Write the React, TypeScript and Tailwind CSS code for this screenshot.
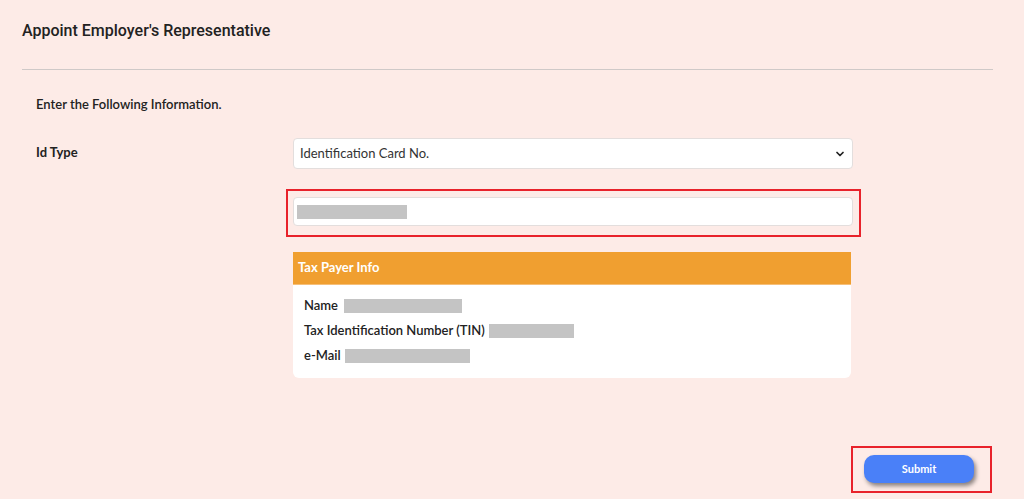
import { ChevronDown } from "lucide-react";

const body = "font-['Lato','Liberation_Sans',sans-serif]";

function Redacted({ className }: { className: string }) {
  return <span className={`inline-block h-[14px] bg-[#c4c4c4] align-middle ${className}`} />;
}

export default function App() {
  return (
    <div className={`min-h-[499px] w-full bg-[#fdebe7] px-[22px] pt-[21px] text-[#222] ${body}`}>
      <h1 className="font-['Roboto',sans-serif] text-[16px] font-medium leading-5 text-[#222]">
        Appoint Employer's Representative
      </h1>
      <div className="mt-[28px] mr-[9px] h-px bg-[#cfc9c8]" />

      <div className="pl-[14px]">
        <p className="mt-[26px] text-[13px] font-semibold leading-4">Enter the Following Information.</p>

        <div className="mt-[26px] flex">
          <label className="w-[257px] shrink-0 pt-[6px] text-[13px] font-bold leading-4">Id Type</label>
          <div className="w-[560px]">
            <div className="flex h-[31px] items-center justify-between rounded-[4px] border border-[#e3dedd] bg-white pl-[6px] pr-[6px]">
              <span className="text-[13px] text-[#333]">Identification Card No.</span>
              <ChevronDown size={12} strokeWidth={3.5} className="text-[#222]" />
            </div>

            <div className="relative mt-[28px]">
              <div className="flex h-[29px] items-center rounded-[4px] border border-[#e3dedd] bg-white pl-[3px]">
                <Redacted className="w-[110px]" />
              </div>
              <span className="pointer-events-none absolute -top-[8px] -bottom-[11px] -left-[7px] -right-[8px] border-2 border-[#e8222b]" />
            </div>

            <div className="mt-[26px] mr-[2px] overflow-hidden rounded-b-[6px] bg-white">
              <div className="flex h-[33px] items-center border-b border-[#f6bf79] bg-[#f09f30] px-[5px] text-[13px] font-bold text-white">
                Tax Payer Info
              </div>
              <div className="flex flex-col gap-[10px] px-[11px] pt-[13px] pb-[15px] text-[13px] font-semibold leading-[15px]">
                <div className="flex items-center gap-[6px]">
                  <span>Name</span>
                  <Redacted className="w-[118px]" />
                </div>
                <div className="flex items-center gap-[4px]">
                  <span>Tax Identification Number (TIN)</span>
                  <Redacted className="w-[85px]" />
                </div>
                <div className="flex items-center gap-[4px]">
                  <span>e-Mail</span>
                  <Redacted className="w-[125px]" />
                </div>
              </div>
            </div>
          </div>
        </div>

        <div className="mt-[77px] flex justify-end pr-[28px]">
          <div className="relative">
            <button className="h-[28px] w-[110px] rounded-[10px] bg-[#4a80f8] text-[11px] font-bold text-white shadow-[2px_3px_4px_rgba(0,0,0,0.45)]">
              Submit
            </button>
            <span className="pointer-events-none absolute -top-[9px] -bottom-[10px] -left-[13px] -right-[18px] border-2 border-[#e8222b]" />
          </div>
        </div>
      </div>
    </div>
  );
}
